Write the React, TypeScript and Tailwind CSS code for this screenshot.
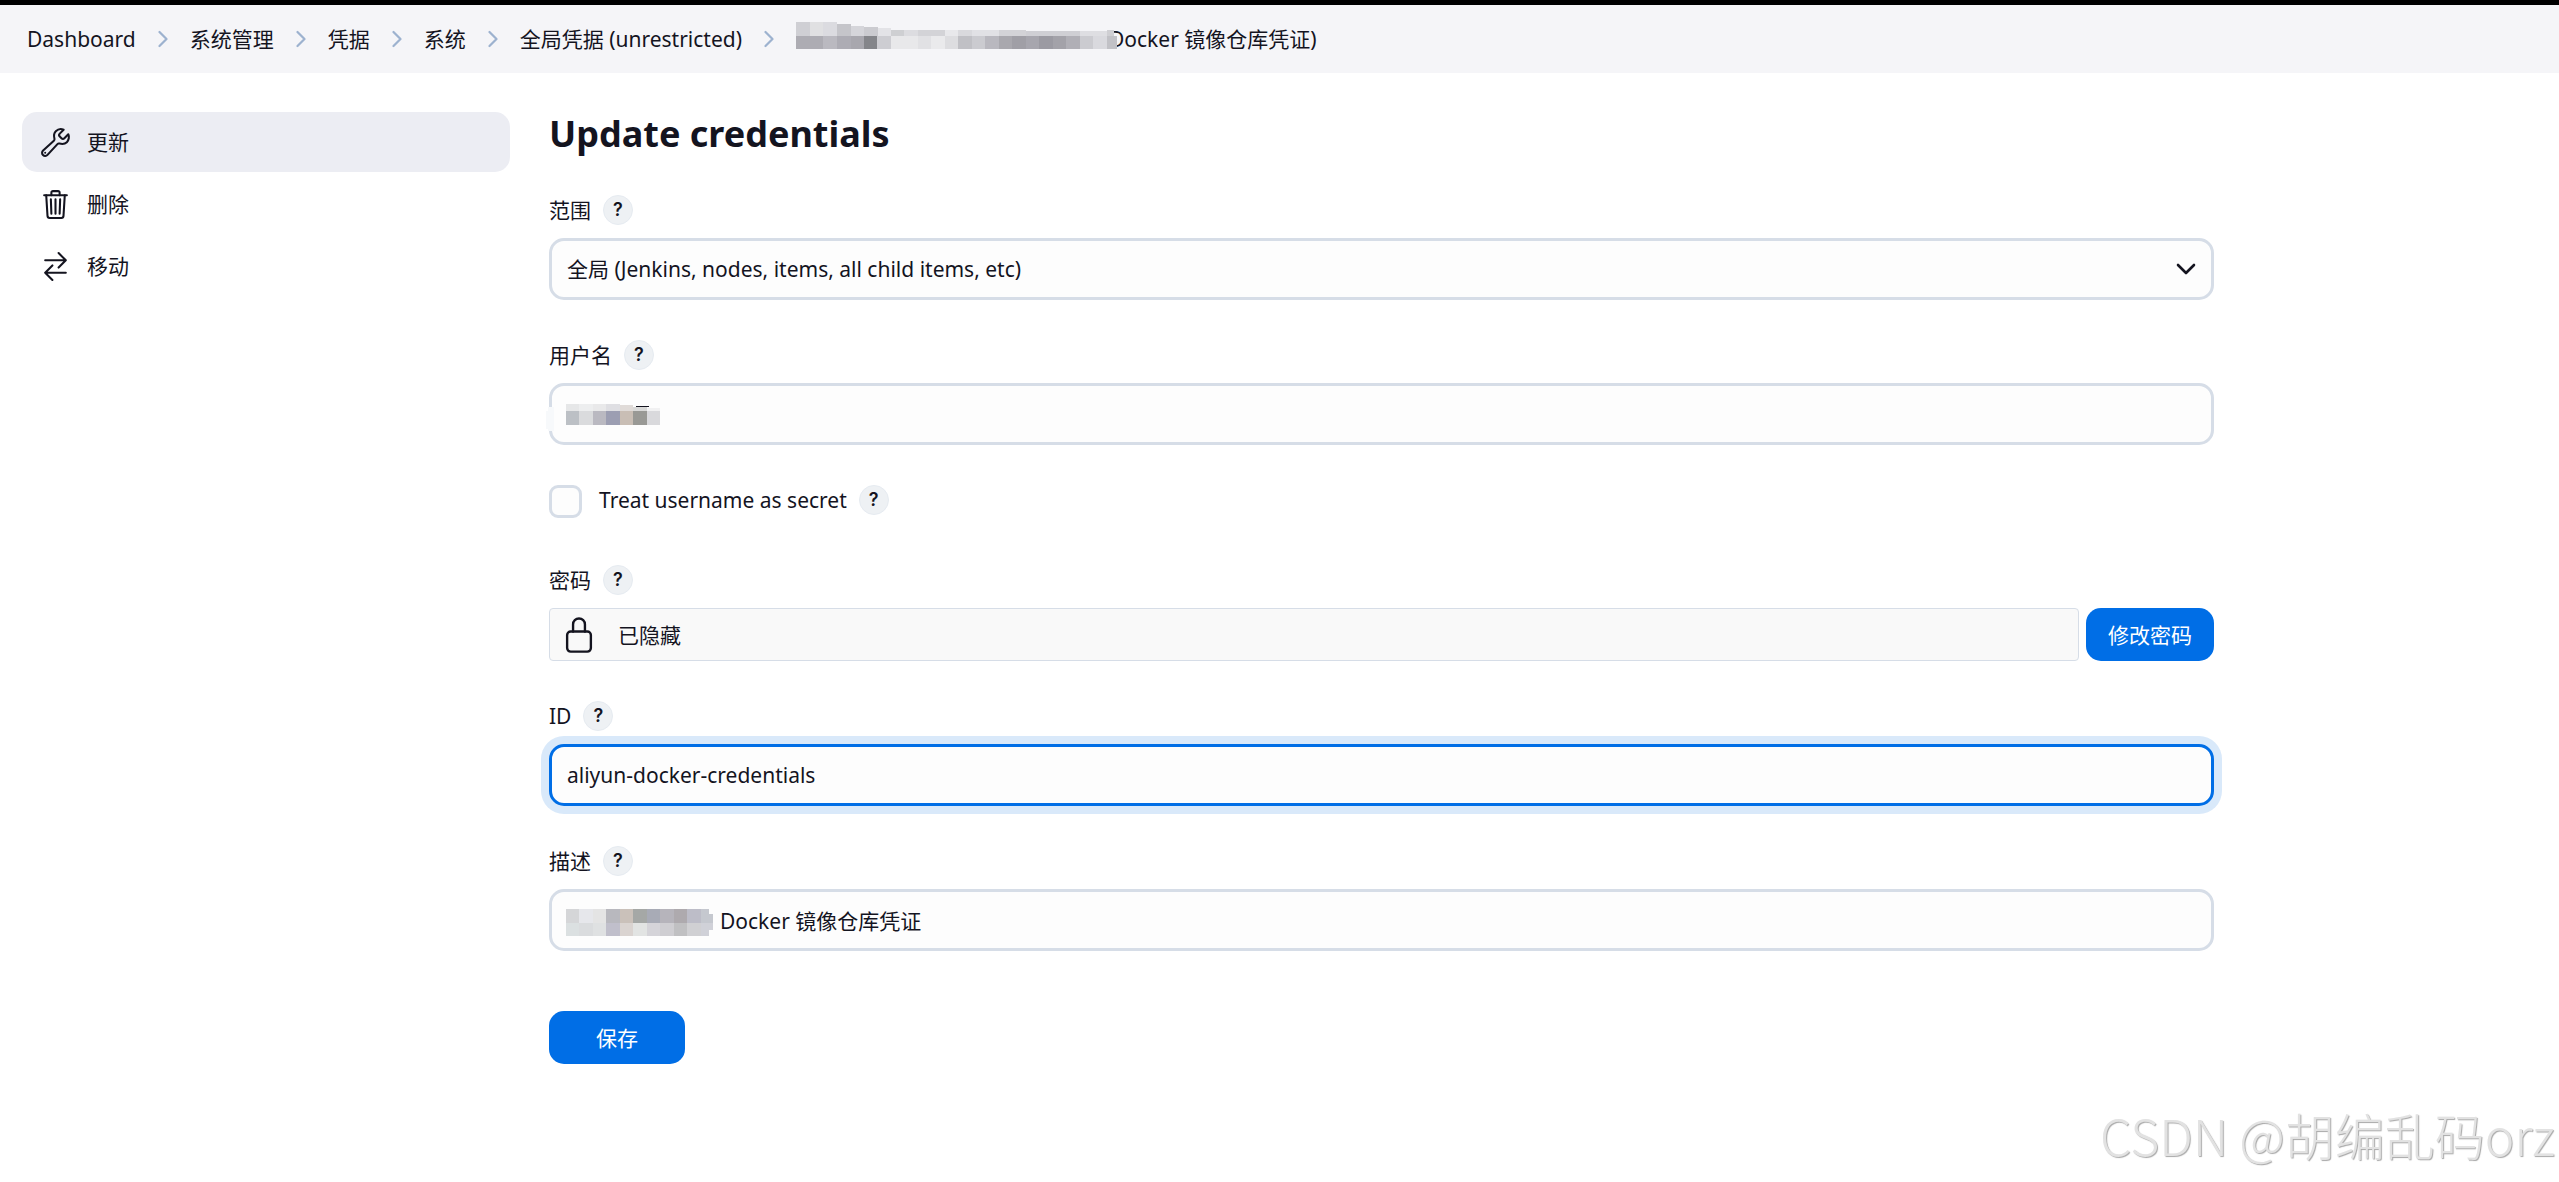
import type { ReactNode } from 'react';
import { IoBuildOutline, IoLockClosedOutline, IoSwapHorizontalOutline, IoTrashOutline } from 'react-icons/io5';

type Cell = [x: number, y: number, w: number, h: number, fill: string];

// top row is partly rubbed out, so its cells vary in height
const breadcrumbMask: Cell[] = [
  [0, 0, 14, 14, '#cfcfd4'], [14, 0, 13, 14, '#e0e0e2'], [27, 0, 14, 14, '#dbdbe0'],
  [41, 2, 14, 12, '#c5c5ca'], [55, 4, 13, 10, '#d5d5da'], [68, 5, 14, 9, '#cbcbd0'],
  [82, 6, 13, 8, '#e3e3e7'], [95, 8, 13, 6, '#cecfd2'], [108, 8, 14, 6, '#dcdce0'],
  [122, 8, 27, 6, '#d3d3d7'], [149, 8, 13, 6, '#e8e8eb'], [162, 8, 14, 6, '#d9d9dd'],
  [176, 8, 27, 6, '#e1e1e5'], [203, 8, 27, 6, '#d3d3d7'], [230, 9, 54, 5, '#cfcfd4'],
  [284, 9, 27, 5, '#dedee2'], [311, 8, 7, 6, '#cfcfd3'],
  [0, 14, 27, 13, '#adacb3'], [27, 14, 14, 13, '#bab9c0'], [41, 14, 14, 13, '#adacb4'],
  [55, 14, 13, 13, '#a8a7ae'], [68, 14, 13, 13, '#84858a'], [81, 14, 14, 13, '#cdcdd2'],
  [95, 14, 27, 13, '#e8e8ea'], [122, 14, 13, 13, '#e1e1e4'], [135, 14, 14, 13, '#eaeaec'],
  [149, 14, 13, 13, '#dddde0'], [162, 14, 14, 13, '#c0c0c5'], [176, 14, 13, 13, '#cbcbd0'],
  [189, 14, 14, 13, '#b9b8bf'], [203, 14, 13, 13, '#a9a8ae'], [216, 14, 14, 13, '#a09fa6'],
  [230, 14, 13, 13, '#a7a6ae'], [243, 14, 14, 13, '#9b9aa2'], [257, 14, 13, 13, '#a3a2a9'],
  [270, 14, 14, 13, '#b0afb6'], [284, 14, 13, 13, '#cbcbd0'], [297, 14, 14, 13, '#d9d9de'],
  [311, 14, 10, 13, '#c1c1c6'],
];

// the first two cells spill over the left border of the text box
const usernameMask: Cell[] = [
  [-20, 7, 2, 18, '#f7f9fb'], [-18, 3, 6, 24, '#f7f9fb'],
  [0, 0, 13, 7, '#e6e7e8'], [13, 0, 14, 7, '#edeeef'], [27, 0, 13, 7, '#e9e9ea'],
  [40, 0, 14, 7, '#dfdfe3'], [54, 1, 13, 6, '#e0dbd8'], [67, 3, 14, 4, '#d9d9d8'],
  [81, 4, 13, 3, '#f1f1f2'],
  [0, 7, 13, 14, '#bcc0c5'], [13, 7, 14, 14, '#dadbdd'], [27, 7, 13, 14, '#bab9c1'],
  [40, 7, 14, 14, '#9c9eb2'], [54, 7, 13, 14, '#c9beb5'], [67, 7, 14, 14, '#999995'],
  [81, 7, 13, 14, '#d9d9dc'],
  [70, 2, 13, 1, '#14141f'],
];

const descriptionMask: Cell[] = [
  [0, 0, 13, 14, '#d5d6d8'], [13, 0, 14, 14, '#e6e7eb'], [27, 0, 13, 14, '#e4e4e4'],
  [40, 0, 14, 14, '#b8b8be'], [54, 0, 13, 14, '#cac1ba'], [67, 0, 14, 14, '#a5a8a6'],
  [81, 0, 13, 14, '#a8abb6'], [94, 0, 14, 14, '#b6b4bb'], [108, 0, 13, 14, '#aeaaae'],
  [121, 0, 14, 14, '#bdbdc8'], [135, 0, 8, 14, '#c5c8cf'], [143, 5, 4, 9, '#c5c8cf'],
  [0, 14, 13, 13, '#dbe0e1'], [13, 14, 14, 13, '#dadcde'], [27, 14, 13, 13, '#dfe1e2'],
  [40, 14, 14, 13, '#c0bfcb'], [54, 14, 13, 13, '#dad4d1'], [67, 14, 14, 13, '#e2e4e3'],
  [81, 14, 13, 13, '#d5d4d9'], [94, 14, 14, 13, '#cfced2'], [108, 14, 13, 13, '#c0c0c2'],
  [121, 14, 14, 13, '#d0d0d3'], [135, 14, 8, 13, '#d0d1d8'], [143, 14, 4, 7, '#d0d1d8'],
];

function Mosaic({ cells, width, height }: { cells: Cell[]; width: number; height: number }) {
  return (
    <svg width={width} height={height} shapeRendering="crispEdges" aria-hidden="true" className="shrink-0 overflow-visible">
      {cells.map(([x, y, w, h, fill], i) => (
        <rect key={i} x={x} y={y} width={w} height={h} fill={fill} />
      ))}
    </svg>
  );
}

function Chevron() {
  return (
    <svg width="10" height="18" viewBox="0 0 10 18" fill="none" stroke="#9db2cf" strokeWidth="2.2" strokeLinecap="round" strokeLinejoin="round" aria-hidden="true">
      <path d="M1.5 2 8.5 9l-7 7" />
    </svg>
  );
}

function Help() {
  return (
    <button
      type="button"
      aria-label="Help"
      className="flex size-[30px] items-center justify-center rounded-full border border-[#e6ebf1] bg-[#eef1f4] font-['Inter',sans-serif] text-lg leading-none font-semibold"
    >
      ?
    </button>
  );
}

function Field({ id, label, children }: { id: string; label: string; children: ReactNode }) {
  return (
    <div className="mb-10">
      <div className="mb-[13px] flex h-[30px] items-center gap-3">
        <label htmlFor={id}>{label}</label>
        <Help />
      </div>
      {children}
    </div>
  );
}

const crumbs = ['Dashboard', '系统管理', '凭据', '系统', '全局凭据 (unrestricted)'];

const tasks = [
  { label: '更新', icon: IoBuildOutline, active: true },
  { label: '删除', icon: IoTrashOutline, active: false },
  { label: '移动', icon: IoSwapHorizontalOutline, active: false },
];

const inputClass = 'block h-[62px] w-full rounded-[15px] border-3 border-[#d6dde7] bg-[#fdfdfd] px-[15px] outline-none';
const buttonClass = 'shrink-0 rounded-[15px] bg-[#006ee6] text-white';

export default function App() {
  return (
    <div className="relative min-h-screen bg-white font-['Noto_Sans','Noto_Sans_CJK_SC',sans-serif] text-[21px] leading-[30px] text-[#14141f]">
      <nav className="flex h-[73px] items-center gap-[22px] border-t-5 border-black bg-[#f5f5f8] px-[27px]">
        {crumbs.map((crumb) => (
          <div key={crumb} className="flex items-center gap-[22px]">
            <a href="#">{crumb}</a>
            <Chevron />
          </div>
        ))}
        <a href="#" className="flex items-center">
          <span className="z-10 flex pb-2">
            <Mosaic cells={breadcrumbMask} width={321} height={27} />
          </span>
          <span className="-ml-2">Docker 镜像仓库凭证)</span>
        </a>
      </nav>

      <main className="flex gap-[39px] px-[22px] pt-[39px]">
        <aside className="flex w-[488px] shrink-0 flex-col gap-0.5">
          {tasks.map(({ label, icon: Icon, active }) => (
            <a
              key={label}
              href="#"
              className={`flex h-[60px] items-center gap-[15px] rounded-[15px] px-[17px] ${active ? 'bg-[#ecedf3]' : ''}`}
            >
              <Icon size={33} />
              {label}
            </a>
          ))}
        </aside>

        <form className="max-w-[1665px] flex-1" onSubmit={(e) => e.preventDefault()}>
          <h1 className="mb-[39px] text-4xl leading-11 font-bold">Update credentials</h1>

          <Field id="scope" label="范围">
            <div className="relative">
              <select id="scope" className={`${inputClass} appearance-none`}>
                <option>全局 (Jenkins, nodes, items, all child items, etc)</option>
              </select>
              <svg width="20" height="12" viewBox="0 0 20 12" fill="none" stroke="currentColor" strokeWidth="2.6" strokeLinecap="round" strokeLinejoin="round" className="pointer-events-none absolute top-[25px] right-[18px]">
                <path d="M2 2l8 8 8-8" />
              </svg>
            </div>
          </Field>

          <Field id="username" label="用户名">
            <div className="relative">
              <input id="username" type="text" className={inputClass} />
              <div className="pointer-events-none absolute top-[21px] left-[17px]">
                <Mosaic cells={usernameMask} width={94} height={21} />
              </div>
            </div>
          </Field>

          <div className="mb-10 flex h-10 items-start">
            <input id="secret" type="checkbox" className="mr-[17px] size-[33px] appearance-none rounded-[9px] border-3 border-[#d6dde7] bg-[#fdfdfd]" />
            <label htmlFor="secret" className="mr-3">Treat username as secret</label>
            <Help />
          </div>

          <Field id="password" label="密码">
            <div className="flex h-[53px] gap-[7px]">
              <div className="flex flex-1 items-center gap-5 rounded-[4px] border border-[#d6dde7] bg-[#f9f9f9] px-2.5">
                <IoLockClosedOutline size={38} />
                已隐藏
              </div>
              <button id="password" type="button" className={`${buttonClass} px-[22px]`}>修改密码</button>
            </div>
          </Field>

          <Field id="credential-id" label="ID">
            <input
              id="credential-id"
              type="text"
              defaultValue="aliyun-docker-credentials"
              className="block h-[62px] w-full rounded-[15px] border-3 border-[#006ee6] bg-[#fdfdfd] px-[15px] ring-8 ring-[#d9e9fa] outline-none"
            />
          </Field>

          <Field id="description" label="描述">
            <div className="relative">
              <input id="description" type="text" defaultValue="Docker 镜像仓库凭证" className={`${inputClass} pl-[168px]`} />
              <div className="pointer-events-none absolute top-5 left-[17px]">
                <Mosaic cells={descriptionMask} width={147} height={27} />
              </div>
            </div>
          </Field>

          <button type="submit" className={`${buttonClass} mt-5 h-[53px] px-[47px]`}>保存</button>
        </form>
      </main>

      <div className="pointer-events-none absolute right-1 bottom-3 font-['Noto_Sans_CJK_SC',sans-serif] text-[50px] leading-[72px] font-light text-[#e2e2e2] [text-shadow:1px_1px_1px_#a8a8a8]">
        CSDN @胡编乱码orz
      </div>
    </div>
  );
}
